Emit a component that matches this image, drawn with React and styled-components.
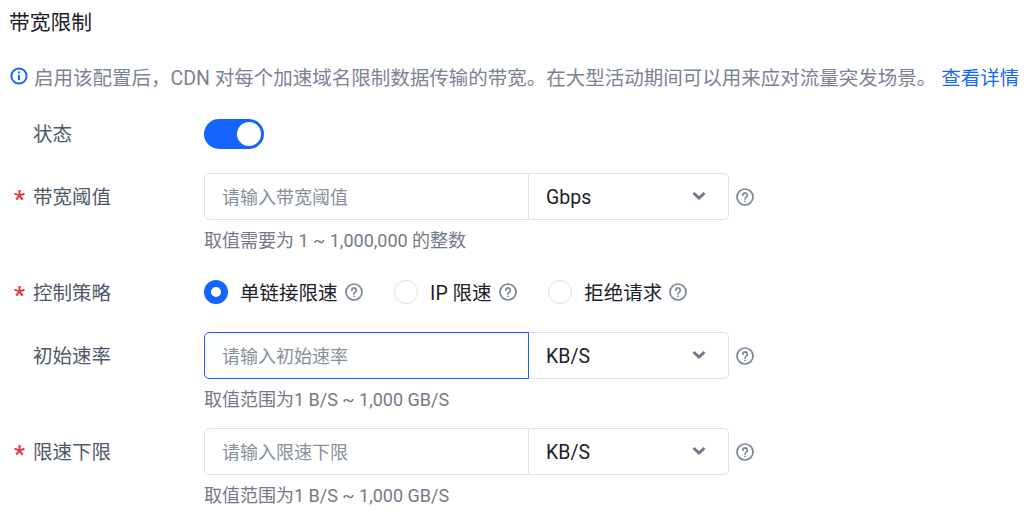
import styled, { createGlobalStyle } from "styled-components";

const GlobalStyle = createGlobalStyle`
  html, body {
    margin: 0;
    background: #fff;
    font-family: Roboto, "Noto Sans CJK SC", sans-serif;
  }
`;

const Page = styled.div`
  width: 1031px;
  height: 516px;
  overflow: hidden;
  box-sizing: border-box;
  padding: 9px 0 0 9px;
`;

const Title = styled.h2`
  margin: 0;
  height: 28px;
  font-size: 20.75px;
  line-height: 28px;
  font-weight: 400;
  color: #1d2129;
`;

const Notice = styled.div`
  display: flex;
  align-items: center;
  gap: 6px;
  margin-top: 25px;
  height: 28px;
  font-size: 19.5px;
  color: #7a8394;
  white-space: nowrap;
`;

const NoticeLink = styled.a`
  color: #1664ff;
  margin-left: 5px;
`;

const Form = styled.div`
  display: flex;
  flex-direction: column;
  margin-top: 20px;
`;

const Row = styled.div`
  display: flex;
  align-items: flex-start;
  height: ${({ $height }) => $height}px;
`;

const Star = styled.span`
  width: 24px;
  height: 47px;
  line-height: 53px;
  font-size: 24px;
  font-weight: 700;
  color: #e23d3d;
  padding-left: 5px;
  box-sizing: border-box;
  flex: none;
`;

const Label = styled.label`
  width: 171px;
  flex: none;
  height: 47px;
  line-height: 49px;
  font-size: 19.5px;
  color: #4e5969;
`;

const Control = styled.div`
  display: flex;
  flex-direction: column;
`;

const InlineRow = styled.div`
  display: flex;
  align-items: center;
  height: 47px;
`;

const Toggle = styled.div`
  width: 60px;
  height: 30px;
  border-radius: 15px;
  background: #1664ff;
  display: flex;
  justify-content: flex-end;
  align-items: center;
  padding: 0 3px;
  box-sizing: border-box;
`;

const Knob = styled.span`
  width: 24px;
  height: 24px;
  border-radius: 50%;
  background: #fff;
`;

const Group = styled.div`
  display: flex;
  align-items: stretch;
  width: 525px;
  height: 47px;
  box-sizing: border-box;
`;

const TextInput = styled.input`
  width: 325px;
  box-sizing: border-box;
  padding: 2px 17px 0;
  font: inherit;
  font-size: 18px;
  color: #1d2129;
  background: #fff;
  outline: none;
  border: 1px solid ${({ $focused }) => ($focused ? "#1664ff" : "#dde2e9")};
  border-radius: 5px 0 0 5px;

  &::placeholder {
    color: #86909c;
    opacity: 1;
  }
`;

const Select = styled.div`
  width: 200px;
  box-sizing: border-box;
  display: flex;
  align-items: center;
  justify-content: space-between;
  padding: 1px 21px 0 17px;
  border: 1px solid #dde2e9;
  border-left: none;
  border-radius: 0 5px 5px 0;
  font-size: 19.5px;
  color: #1d2129;
`;

const Help = styled.div`
  height: 34px;
  line-height: 42px;
  font-size: 18px;
  color: #737a87;
  white-space: nowrap;
`;

const Radio = styled.span`
  width: 24px;
  height: 24px;
  flex: none;
  box-sizing: border-box;
  border-radius: 50%;
  background: #fff;
  border: ${({ $checked }) =>
    $checked ? "7.5px solid #1664ff" : "1px solid #dde2e9"};
`;

const RadioItem = styled.div`
  display: flex;
  align-items: center;
  font-size: 19.5px;
  color: #1d2129;
  margin-right: 31.6px;
  margin-top: -2px;
  span + span {
    margin-left: 12px;
  }
`;

function QuestionIcon({ left = 7 }) {
  return (
    <svg
      width="18"
      height="18"
      viewBox="0 0 18 18"
      fill="none"
      stroke="#7a8499"
      strokeWidth="1.7"
      style={{ marginLeft: left, flex: "none" }}
    >
      <circle cx="9" cy="9" r="8" />
      <path d="M6.7 7.2a2.3 2.3 0 1 1 3.6 1.9c-.8.5-1.3.9-1.3 1.9" strokeLinecap="round" />
      <circle cx="9" cy="13.4" r=".6" fill="#7a8499" strokeWidth=".6" />
    </svg>
  );
}

function InfoIcon() {
  return (
    <svg
      width="18"
      height="18"
      viewBox="0 0 18 18"
      fill="none"
      stroke="#1664ff"
      strokeWidth="2"
      style={{ flex: "none", marginLeft: 1 }}
    >
      <circle cx="9" cy="9" r="7.6" />
      <path d="M9 8v5" />
      <path d="M9 4.5v2" />
    </svg>
  );
}

function ChevronIcon() {
  return (
    <svg
      width="16"
      height="10"
      viewBox="0 0 16 10"
      fill="none"
      stroke="#737a87"
      strokeWidth="3"
      style={{ marginTop: -3 }}
    >
      <path d="M2.5 2l5.5 5 5.5-5" />
    </svg>
  );
}

function InputRow({ label, required, placeholder, unit, help, focused }) {
  return (
    <Row $height={96}>
      <Star>{required ? "*" : ""}</Star>
      <Label>{label}</Label>
      <Control>
        <InlineRow>
          <Group>
            <TextInput placeholder={placeholder} $focused={focused} readOnly />
            <Select>
              {unit}
              <ChevronIcon />
            </Select>
          </Group>
          <QuestionIcon />
        </InlineRow>
        <Help>{help}</Help>
      </Control>
    </Row>
  );
}

export default function App() {
  return (
    <Page>
      <GlobalStyle />
      <Title>带宽限制</Title>
      <Notice>
        <InfoIcon />
        <span>
          启用该配置后，CDN 对每个加速域名限制数据传输的带宽。在大型活动期间可以用来应对流量突发场景。
          <NoticeLink>查看详情</NoticeLink>
        </span>
      </Notice>
      <Form>
        <Row $height={63}>
          <Star />
          <Label>状态</Label>
          <InlineRow>
            <Toggle>
              <Knob />
            </Toggle>
          </InlineRow>
        </Row>
        <InputRow
          label="带宽阈值"
          required
          placeholder="请输入带宽阈值"
          unit="Gbps"
          help="取值需要为 1 ~ 1,000,000 的整数"
        />
        <Row $height={63}>
          <Star>*</Star>
          <Label>控制策略</Label>
          <InlineRow>
            <RadioItem>
              <Radio $checked />
              <span>单链接限速</span>
              <QuestionIcon />
            </RadioItem>
            <RadioItem>
              <Radio />
              <span>IP 限速</span>
              <QuestionIcon />
            </RadioItem>
            <RadioItem>
              <Radio />
              <span>拒绝请求</span>
              <QuestionIcon />
            </RadioItem>
          </InlineRow>
        </Row>
        <InputRow
          label="初始速率"
          placeholder="请输入初始速率"
          unit="KB/S"
          help="取值范围为1 B/S ~ 1,000 GB/S"
          focused
        />
        <InputRow
          label="限速下限"
          required
          placeholder="请输入限速下限"
          unit="KB/S"
          help="取值范围为1 B/S ~ 1,000 GB/S"
        />
      </Form>
    </Page>
  );
}
